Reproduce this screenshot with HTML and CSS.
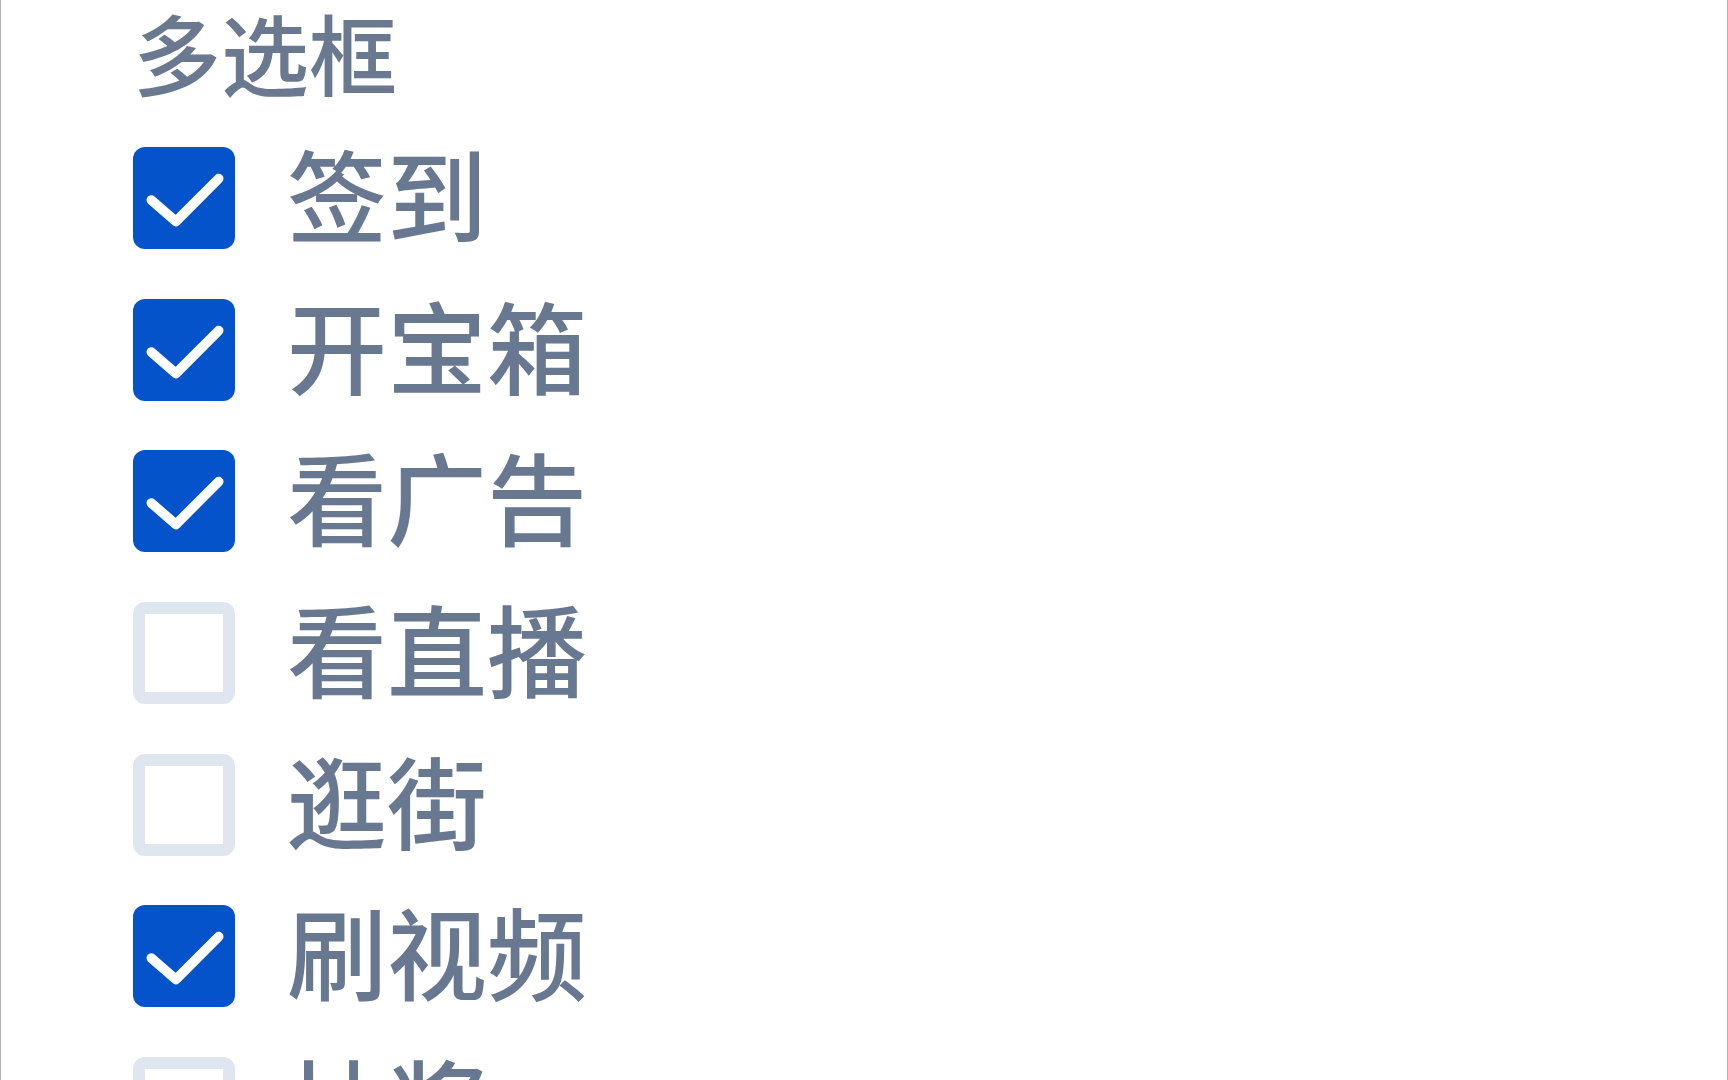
FILE: index.html
```html
<!DOCTYPE html>
<html lang="zh-CN">
<head>
<meta charset="utf-8">
<title>多选框</title>
<link rel="stylesheet" href="styles.css">
</head>
<body>
<div class="page">
  <div class="title">多选框</div>
  <ul class="list">
    <li class="row"><span class="box checked"><svg viewBox="0 0 100 100"><polyline points="18,52 42,73 84,31"/></svg></span><span class="label">签到</span></li>
    <li class="row"><span class="box checked"><svg viewBox="0 0 100 100"><polyline points="18,52 42,73 84,31"/></svg></span><span class="label">开宝箱</span></li>
    <li class="row"><span class="box checked"><svg viewBox="0 0 100 100"><polyline points="18,52 42,73 84,31"/></svg></span><span class="label">看广告</span></li>
    <li class="row"><span class="box"></span><span class="label">看直播</span></li>
    <li class="row"><span class="box"></span><span class="label">逛街</span></li>
    <li class="row"><span class="box checked"><svg viewBox="0 0 100 100"><polyline points="18,52 42,73 84,31"/></svg></span><span class="label">刷视频</span></li>
    <li class="row"><span class="box"></span><span class="label">抽奖</span></li>
  </ul>
</div>
</body>
</html>
```
FILE: styles.css
```css
html, body {
  margin: 0;
  padding: 0;
  background: #ffffff;
  overflow: hidden;
}
body {
  font-family: "Noto Sans CJK SC", "Noto Sans", sans-serif;
  color: #687890;
}
.page {
  box-sizing: border-box;
  width: 1728px;
  height: 1080px;
  border-left: 1px solid #b4b4b4;
  border-right: 1px solid #b4b4b4;
  padding-left: 132px;
  padding-top: 7px;
  overflow: hidden;
}
.title {
  font-size: 88px;
  font-weight: 500;
  line-height: 88px;
  height: 88px;
  color: #6a798f;
}
.list {
  list-style: none;
  margin: 52px 0 0 0;
  padding: 0;
  display: flex;
  flex-direction: column;
  gap: 49.7px;
}
.row {
  display: flex;
  align-items: center;
  height: 102px;
  gap: 52px;
}
.box {
  box-sizing: border-box;
  flex: 0 0 auto;
  width: 102px;
  height: 102px;
  border-radius: 12px;
  border: 12px solid #dfe6ef;
  background: #ffffff;
  display: flex;
  align-items: center;
  justify-content: center;
}
.box.checked {
  border: none;
  background: #0453cb;
}
.box svg {
  width: 102px;
  height: 102px;
  display: block;
}
.box svg polyline {
  fill: none;
  stroke: #ffffff;
  stroke-width: 9.5;
  stroke-linecap: round;
  stroke-linejoin: round;
}
.label {
  font-size: 100px;
  font-weight: 500;
  line-height: 100px;
  padding-bottom: 12px;
  color: #687890;
}
```
